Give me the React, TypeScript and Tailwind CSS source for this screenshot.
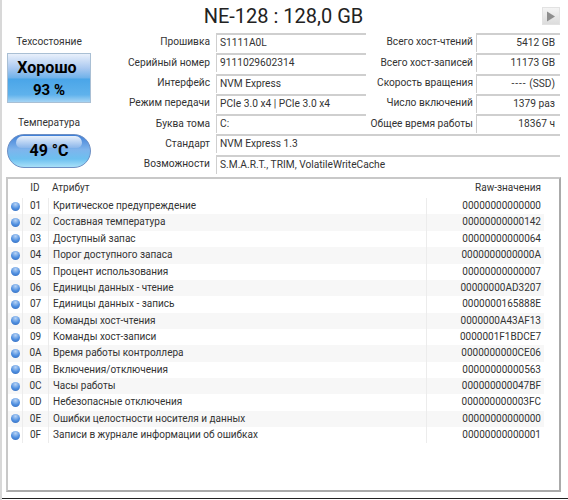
import type { ReactNode } from 'react';

const font = { fontFamily: 'Roboto, "Open Sans", sans-serif' };

const infoRows: { label: string; value: string; label2?: string; value2?: ReactNode }[] = [
  { label: 'Прошивка', value: 'S1111A0L', label2: 'Всего хост-чтений', value2: '5412 GB' },
  { label: 'Серийный номер', value: '9111029602314', label2: 'Всего хост-записей', value2: '11173 GB' },
  {
    label: 'Интерфейс',
    value: 'NVM Express',
    label2: 'Скорость вращения',
    value2: (
      <>
        <span className="tracking-[1px]">----</span> (SSD)
      </>
    ),
  },
  { label: 'Режим передачи', value: 'PCIe 3.0 x4 | PCIe 3.0 x4', label2: 'Число включений', value2: '1379 раз' },
  { label: 'Буква тома', value: 'C:', label2: 'Общее время работы', value2: '18367 ч' },
  { label: 'Стандарт', value: 'NVM Express 1.3' },
  { label: 'Возможности', value: 'S.M.A.R.T., TRIM, VolatileWriteCache' },
];

const attrs = [
  ['01', 'Критическое предупреждение', '00000000000000'],
  ['02', 'Составная температура', '00000000000142'],
  ['03', 'Доступный запас', '00000000000064'],
  ['04', 'Порог доступного запаса', '0000000000000A'],
  ['05', 'Процент использования', '00000000000007'],
  ['06', 'Единицы данных - чтение', '00000000AD3207'],
  ['07', 'Единицы данных - запись', '0000000165888E'],
  ['08', 'Команды хост-чтения', '0000000A43AF13'],
  ['09', 'Команды хост-записи', '0000001F1BDCE7'],
  ['0A', 'Время работы контроллера', '0000000000CE06'],
  ['0B', 'Включения/отключения', '00000000000563'],
  ['0C', 'Часы работы', '000000000047BF'],
  ['0D', 'Небезопасные отключения', '000000000003FC'],
  ['0E', 'Ошибки целостности носителя и данных', '00000000000000'],
  ['0F', 'Записи в журнале информации об ошибках', '00000000000001'],
];

function Field({ children, right }: { children: ReactNode; right?: boolean }) {
  return (
    <div
      className={`h-[19px] border-t-2 border-l border-[#cfcfcf] bg-white text-[10.2px] leading-[15px] text-[#333] ${
        right ? 'pr-[5px] text-right' : 'pl-[3px]'
      }`}
    >
      {children}
    </div>
  );
}

function Dot() {
  return (
    <div className="h-[9px] w-[9px] rounded-full bg-[radial-gradient(circle_at_50%_25%,#b9d4f5_0%,#4f8fe0_55%,#2f66b8_100%)]" />
  );
}

export default function App() {
  return (
    <div
      className="h-[500px] w-[568px] overflow-hidden border-l-2 border-[#d8d8d8] bg-white text-[#333] [font-variant-ligatures:none]"
      style={font}
    >
      <div className="flex h-[499px] flex-col border-b border-[#222] pl-[4px] pr-[7px]">
        <div className="relative h-[33px] text-center text-[20px] leading-[33px] text-[#222]">
          NE-128 : 128,0 GB
          <div className="absolute right-[1px] top-[7px] flex h-[18px] w-[18px] items-center justify-center border border-[#e2e2e2] bg-gradient-to-b from-[#f4f4f4] to-[#dcdcdc]">
            <svg width="10" height="11" viewBox="0 0 10 11">
              <path d="M1 0.5 L9 5.5 L1 10.5 Z" fill="#8e8e8e" />
            </svg>
          </div>
        </div>

        <div className="flex">
          <div className="ml-[1px] w-[84px] shrink-0 text-center text-[10.2px] text-[#333]">
            <div className="mb-[2px] flex h-[18px] items-center justify-center">Техсостояние</div>
            <div className="flex h-[50px] flex-col items-center border border-[#a9bfd4] bg-[linear-gradient(to_bottom,#e9f0fb_0%,#a9c8f0_30%,#6fb2ea_50%,#4aa5e8_52%,#5fb2ec_85%,#a5d4f4_100%)] pt-[3px] font-bold text-black">
              <div className="pr-[4px] text-[16px] leading-[22px]">Хорошо</div>
              <div className="text-[15px] leading-[22px]">93 %</div>
            </div>
            <div className="flex h-[31px] items-end justify-center pb-[4px]">Температура</div>
            <div className="relative flex h-[34px] items-center justify-center rounded-[17px] border border-[#6d8fc4] bg-[linear-gradient(to_bottom,#3f7fd6_0%,#7fb4ec_45%,#6cc0f0_75%,#a8e0f8_100%)] text-[16px] font-bold text-black">
              <div className="absolute left-[8px] right-[8px] top-[1px] h-[12px] rounded-b-[8px] rounded-t-[10px] bg-gradient-to-b from-[#e8f0fb] to-[#8bb6ea]" />
              <span className="relative">49 °C</span>
            </div>
          </div>

          <div className="ml-[3px] mr-[1px] grid flex-1 grid-cols-[122px_150px_minmax(0,1fr)_84px] grid-rows-[repeat(7,20.3px)] text-[10.2px]">
            {infoRows.map((r) => (
              <div key={r.label} className="contents">
                <div className="flex h-[18px] items-center justify-end whitespace-nowrap pr-[6px]">{r.label}</div>
                {r.label2 ? (
                  <>
                    <Field>{r.value}</Field>
                    <div className="flex h-[18px] items-center justify-end whitespace-nowrap pr-[3px]">{r.label2}</div>
                    <Field right>{r.value2}</Field>
                  </>
                ) : (
                  <div className="col-span-3">
                    <Field>{r.value}</Field>
                  </div>
                )}
              </div>
            ))}
          </div>
        </div>

        <div className="mt-[2px] h-[315px] border-2 border-[#c8c8c8] border-b-[#aaa] border-r-[#aaa] bg-white text-[10px] text-[#333]">
          <div className="flex h-[19px] items-center pb-[2px]">
            <div className="w-[14px]" />
            <div className="w-[26px] text-center">ID</div>
            <div className="w-[378px] pl-[4px]">Атрибут</div>
            <div className="w-[118px] pr-[3px] text-right">Raw-значения</div>
          </div>
          {attrs.map((a, i) => (
            <div
              key={a[0]}
              className={`flex h-[16.36px] w-[536px] items-center leading-[15px] ${i % 2 === 1 ? 'bg-[#f7f7f7]' : 'bg-white'}`}
            >
              <div className="flex w-[14px] justify-center">
                <Dot />
              </div>
              <div className="h-full w-[26px] border-l border-[#ececec] text-center">{a[0]}</div>
              <div className="h-full w-[378px] border-l border-[#ececec] pl-[4px]">{a[1]}</div>
              <div className="h-full w-[118px] border-l border-[#ececec] pr-[3px] text-right">{a[2]}</div>
            </div>
          ))}
        </div>
      </div>
    </div>
  );
}
